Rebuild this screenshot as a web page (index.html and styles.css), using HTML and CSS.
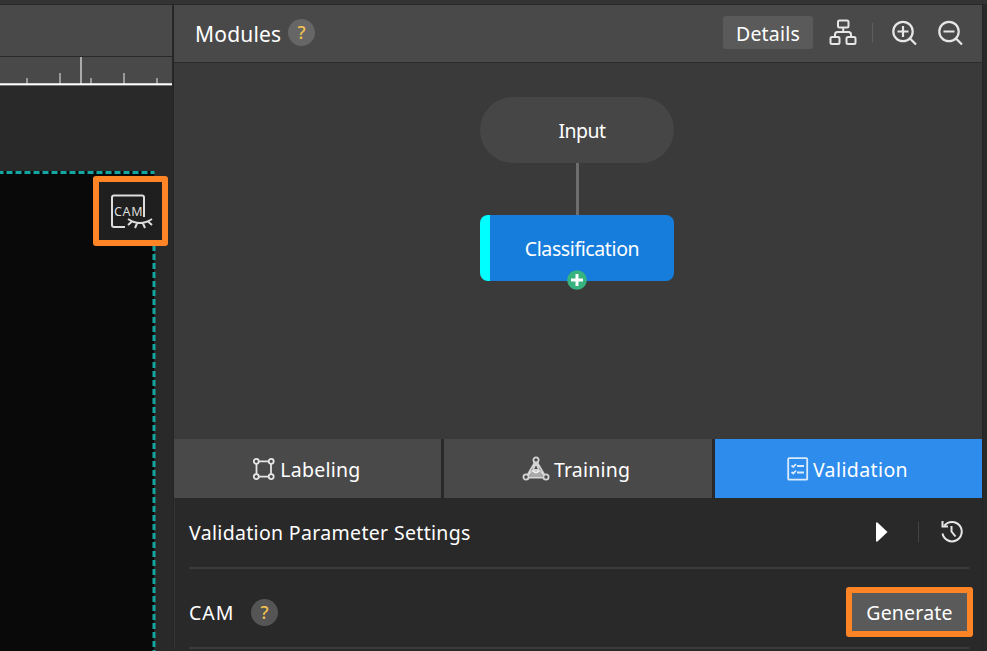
FILE: index.html
```
<!DOCTYPE html>
<html lang="en">
    <head>
        <meta charset="UTF-8">
        <title>Modules</title>
        <link rel="stylesheet" href="styles.css">
    </head>
    <body>
        <div class="app">
            <div class="viewer">
                <div class="toolbar"></div>
                <svg class="ruler" width="172" height="29" viewBox="0 0 172 29">
                    <path d="M27 21v6M60 16v11M91 21v6M124 16v11M157 21v6" stroke="#999" stroke-width="2"/>
                    <path d="M81 0v27" stroke="#aaa" stroke-width="2"/>
                    <path d="M0 27.2h172" stroke="#fff" stroke-width="2"/>
                </svg>
                <div class="stage">
                    <div class="image">
                        <svg class="outline" width="160" height="480">
                            <path d="M-2.500 1.500H154.500" /><path d="M154 74V480" />
                        </svg>
                    </div>
                    <button class="cam-toggle highlight">
                        <svg width="44" height="40" viewBox="0 0 44 40" fill="none" stroke="#ddd" stroke-width="2">
                            <path d="M26 32H15Q13 32 13 30V2.500Q13 .5 15 .5H43Q45 .5 45 2.500V22" />
                            <path d="M29 24Q41 32 53 24M33 26.500l-4 3.500M38 28.500l-2 4.500M44 28.500l2 4.500M49 26.500l4 3.500" />
                            <text x="15" y="20.500" textLength="28.500">CAM</text>
                        </svg>
                    </button>
                </div>
            </div>

            <div class="panel">
                <div class="header">
                    <span class="title">Modules</span>
                    <span class="help">?</span>
                    <button class="details">Details</button>
                    <svg class="tree" width="28" height="28" viewBox="0 0 28 28" fill="none" stroke="#e6e6e6" stroke-width="2">
                        <rect x="9" y="1.500" width="10.500" height="7" rx="1.500"/>
                        <rect x="1.500" y="18" width="9" height="7" rx="1.500"/>
                        <rect x="17.500" y="18" width="9" height="7" rx="1.500"/>
                        <path d="M14.200 8.500v4.500M6 18V15.500q0-2.500 2.500-2.500h11q2.500 0 2.500 2.500v2.500"/>
                    </svg>
                    <span class="separator"></span>
                    <svg class="zoom-in" width="26" height="26" viewBox="0 0 26 26" fill="none" stroke="#e6e6e6" stroke-width="2.200">
                        <circle cx="12" cy="11.500" r="9.700"/><path d="M19 18.500L25 24.500M12 6v11M6.500 11.500h11"/>
                    </svg>
                    <svg class="zoom-out" width="26" height="26" viewBox="0 0 26 26" fill="none" stroke="#e6e6e6" stroke-width="2.200">
                        <circle cx="12" cy="11.500" r="9.700"/><path d="M19 18.500L25 24.500M6.500 11.500h11"/>
                    </svg>
                </div>

                <div class="graph">
                    <div class="node input"><span>Input</span></div>
                    <div class="link"></div>
                    <div class="node module">
                        <span>Classification</span>
                        <svg class="add" width="20" height="20" viewBox="0 0 20 20">
                            <circle cx="10" cy="10" r="9.800" fill="#36b37e"/>
                            <path d="M10 4v12M4 10h12" stroke="#fff" stroke-width="3"/>
                        </svg>
                    </div>
                </div>

                <div class="tabs">
                    <div class="tab labeling">
                        <svg width="24" height="24" viewBox="0 0 24 24" fill="none" stroke="#e6e6e6" stroke-width="1.800">
                            <path d="M6.500 4.300h10M6.500 19.600h10M4.500 7v10M19 7v10"/>
                            <circle cx="4.300" cy="4.300" r="2.500"/><circle cx="19.200" cy="4.300" r="2.500"/>
                            <circle cx="4.300" cy="19.600" r="2.500"/><circle cx="19.200" cy="19.600" r="2.500"/>
                        </svg>
                        <span>Labeling</span>
                    </div>
                    <div class="tab training">
                        <svg width="28" height="26" viewBox="0 0 28 26" fill="none" stroke="#d4d4d4" stroke-width="1.800">
                            <path d="M12.800 6.500L5.500 19M15.200 6.500L22.500 19M7 21.500h14M14 7l-3 7h6zM11 14l-5 6M17 14l5 6"/>
                            <path d="M10 15h8l2.500 6h-13z" fill="#aaa" stroke="none"/>
                            <path d="M10.500 14.500q3.500 4 7 0" stroke="#eee"/>
                            <circle cx="14" cy="4" r="2.600"/>
                            <circle cx="4" cy="21" r="2.600" fill="#494949"/><circle cx="24" cy="21" r="2.600" fill="#494949"/>
                        </svg>
                        <span>Training</span>
                    </div>
                    <div class="tab validation active">
                        <svg width="22" height="24" viewBox="0 0 22 24" fill="none" stroke="#d9eafd" stroke-width="1.800">
                            <rect x="1.200" y="1.200" width="19" height="21.500" rx="1"/>
                            <path d="M4.500 8.500l1.800 1.500 2.700-3M10 9h7M4.500 15l1.800 1.500 2.700-3M10 15.500h7"/>
                        </svg>
                        <span>Validation</span>
                    </div>
                </div>

                <div class="settings">
                    <div class="row">
                        <span class="caption">Validation Parameter Settings</span>
                        <svg class="play" width="13" height="20" viewBox="0 0 13 20"><path d="M1 .5h1.500L12.500 10 2.500 19.500H1z" fill="#fff"/></svg>
                        <span class="separator"></span>
                        <svg class="history" width="24" height="24" viewBox="0 0 24 24" fill="none" stroke="#e6e6e6" stroke-width="2">
                            <path d="M4.500 5.500A9.700 9.700 0 1 1 2.500 13.500M2.500 1V6.500H8M11.500 6v5.500l4 5"/>
                        </svg>
                    </div>
                    <div class="row cam">
                        <span class="caption">CAM</span>
                        <span class="help">?</span>
                        <button class="generate highlight">Generate</button>
                    </div>
                </div>
            </div>
        </div>
    </body>
</html>
```
FILE: styles.css
```
*{
    box-sizing: border-box;
}
body{
    margin: 0;
    background: #292929;
    color: #fff;
    font-family: "Noto Sans", "Open Sans", sans-serif;
    font-size: 19.5px;
    overflow: hidden;
}
button{
    border: 0;
    padding: 0;
    font: inherit;
    color: inherit;
}
svg{
    display: block;
    flex: none;
}
span{
    white-space: nowrap;
}

.app{
    display: flex;
    height: 651px;
    border-top: 4px solid #333;
}

/*left side*/
.viewer{
    width: 173px;
    padding-top: 1px;
}
.toolbar{
    height: 51px;
    width: 172px;
    background: #494949;
}
.ruler{
    margin-top: 1px;
    background: #494949;
}
.stage{
    position: relative;
    height: 565px;
    padding-top: 85px;
}
.image{
    width: 154px;
    height: 480px;
    background: #090909;
}
.outline{
    fill: none;
    stroke: #12a5a2;
    stroke-width: 3;
    stroke-dasharray: 6 3;
}
.highlight{
    border: 6px solid #ff8426;
    border-radius: 3px;
}
.cam-toggle{
    position: absolute;
    left: 93px;
    top: 90px;
    width: 75px;
    height: 70px;
    background: #1f1f1f;
}
.cam-toggle svg{
    margin: 8px 0 0 0;
    overflow: visible;
}
.cam-toggle text{
    font-size: 12.5px;
    fill: #ddd;
    stroke: none;
}

/*right side*/
.panel{
    width: 810px;
    padding-top: 1px;
    border-left: 1px solid #242424;
    border-right: 1px solid #242424;
}
.header{
    display: flex;
    align-items: center;
    height: 58px;
    padding: 0 19px 2px 21px;
    background: #494949;
    border-bottom: 1px solid #2b2b2b;
}
.title{
    width: 93px;
    padding-top: 2px;
    font-size: 21px;
    letter-spacing: .2px;
}
.help{
    width: 27px;
    height: 27px;
    border-radius: 50%;
    background: #666;
    color: #f0c050;
    font-size: 18px;
    font-weight: 500;
    line-height: 27px;
    text-align: center;
}
.details{
    width: 90px;
    height: 33px;
    margin-left: auto;
    padding-top: 2px;
    border-radius: 3px;
    background: #5a5a5a;
    letter-spacing: .2px;
}
.tree{
    margin-left: 16px;
}
.separator{
    width: 1px;
    height: 20px;
    background: #5d5d5d;
}
.header .separator{
    margin: 0 18px 0 15px;
}
.zoom-out{
    margin-left: 20px;
}
.graph{
    height: 376px;
    padding: 34px 2px 0 0;
    background: #3a3a3a;
    display: flex;
    flex-direction: column;
    align-items: center;
}
.node{
    display: flex;
    align-items: center;
    justify-content: center;
    width: 194px;
    height: 66px;
    flex: none;
}
.input{
    padding-left: 10px;
    border-radius: 33px;
    background: #464646;
    letter-spacing: -.5px;
}
.link{
    width: 3px;
    height: 52px;
    background: #6d6d6d;
}
.module{
    position: relative;
    border-left: 10px solid #00ffff;
    border-radius: 8px;
    background: #177ddc;
    letter-spacing: -.4px;
}
.add{
    position: absolute;
    left: 77px;
    top: 55px;
}
.tabs{
    display: grid;
    grid-template-columns: 267px 268px 267px;
    gap: 0 3px;
    height: 60px;
    padding-bottom: 1px;
}
.tab{
    display: flex;
    align-items: center;
    justify-content: center;
    background: #494949;
}
.tab span{
    margin-left: 4px;
    padding-top: 2px;
}
.labeling{
    padding-right: 2px;
    letter-spacing: .25px;
}
.training{
    padding-right: 4px;
    letter-spacing: .2px;
}
.validation{
    padding-right: 2px;
    letter-spacing: .4px;
}
.active{
    background: #2d8cec;
}
.settings{
    padding: 0 13px 0 14px;
    border-left: 1px solid #363636;
}
.row{
    display: flex;
    align-items: center;
    height: 70px;
    padding-bottom: 2px;
    border-bottom: 2px solid #3b3b3b;
    letter-spacing: .33px;
}
.play{
    margin: 0 30px 0 auto;
}
.settings .separator{
    background: #444;
}
.history{
    margin: 0 5px 0 21px;
}
.cam{
    height: 80px;
    padding: 8px 0 0;
}
.cam .caption{
    width: 62px;
    letter-spacing: 1px;
}
.cam .help{
    background: #555;
    letter-spacing: 0;
}
.generate{
    width: 127px;
    height: 50px;
    margin-left: auto;
    margin-right: -4px;
    background: #5a5a5a;
    letter-spacing: .2px;
}
```
